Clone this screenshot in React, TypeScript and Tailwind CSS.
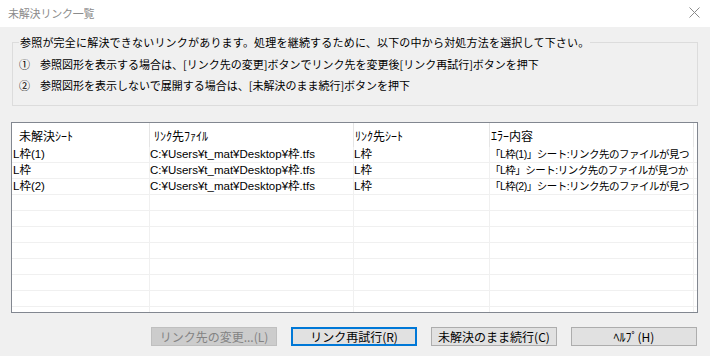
import React from "react";

const FONT = '"Noto Sans CJK JP", sans-serif';
const TABLE_FONT = '"Liberation Sans", "Noto Sans CJK JP", sans-serif';

type Row = { sheet: string; file: string; target: string; error: string };

const rows: Row[] = [
  { sheet: "L枠(1)", file: "C:¥Users¥t_mat¥Desktop¥枠.tfs", target: "L枠", error: "「L枠(1)」シート:リンク先のファイルが見つ" },
  { sheet: "L枠", file: "C:¥Users¥t_mat¥Desktop¥枠.tfs", target: "L枠", error: "「L枠」シート:リンク先のファイルが見つか" },
  { sheet: "L枠(2)", file: "C:¥Users¥t_mat¥Desktop¥枠.tfs", target: "L枠", error: "「L枠(2)」シート:リンク先のファイルが見つ" },
];

const headers = [
  { label: "未解決ｼｰﾄ", cls: "w-[138px] pl-[7px]" },
  { label: "ﾘﾝｸ先ﾌｧｲﾙ", cls: "w-[204px] pl-[4px]" },
  { label: "ﾘﾝｸ先ｼｰﾄ", cls: "w-[136px] pl-[1px]" },
  { label: "ｴﾗｰ内容", cls: "w-[204px] pl-[1px]" },
];

export default function App() {
  const filler = Array.from({ length: 8 });

  return (
    <div className="flex h-[356px] w-[710px] flex-col bg-[#f0f0f0] text-[12px] text-black" style={{ fontFamily: FONT }}>
      {/* title bar */}
      <div className="flex h-[27px] items-center justify-between bg-white pl-2 pr-[10px]">
        <span className="text-[11px] tracking-[-0.2px] text-[#8c8c8c]">未解決リンク一覧</span>
        <svg width="11" height="11" viewBox="0 0 11 11" className="mb-[3px]">
          <path d="M0.5 0.5 L10.5 10.5 M10.5 0.5 L0.5 10.5" stroke="#8a8a8a" strokeWidth="1" />
        </svg>
      </div>

      {/* instructions group */}
      <fieldset className="mx-[12px] mt-[8px] h-[71px] border border-[#dcdcdc] pl-[6px]">
        <legend className="px-[1px] text-[11px] leading-[14px] tracking-[0.2px]">
          参照が完全に解決できないリンクがあります。処理を継続するために、以下の中から対処方法を選択して下さい。
        </legend>
        <div className="mt-[8px] flex flex-col gap-[7px] text-[11px] leading-[14px]">
          <div className="flex">
            <span className="w-[21px]">①</span>
            <span>参照図形を表示する場合は、[リンク先の変更]ボタンでリンク先を変更後[リンク再試行]ボタンを押下</span>
          </div>
          <div className="flex">
            <span className="w-[21px]">②</span>
            <span>参照図形を表示しないで展開する場合は、[未解決のまま続行]ボタンを押下</span>
          </div>
        </div>
      </fieldset>

      {/* list */}
      <div
        className="mx-[11px] mt-[16px] h-[191px] w-[687px] overflow-hidden border border-[#828790] bg-white text-[11.5px]"
        style={{ fontFamily: TABLE_FONT }}
      >
        <div className="flex h-[24px]" style={{ fontFamily: FONT }}>
          {headers.map((h) => (
            <div
              key={h.label}
              className={`${h.cls} flex h-full shrink-0 items-center border-r border-[#e5e5e5] pt-[2px] text-[12px]`}
            >
              {h.label}
            </div>
          ))}
        </div>
        {rows.map((r) => (
          <div key={r.sheet} className="flex h-[16px] border-b border-[#f0f0f0] leading-[15px]">
            <div className="w-[138px] shrink-0 whitespace-nowrap border-r border-[#f0f0f0] pl-[1px]">{r.sheet}</div>
            <div className="w-[204px] shrink-0 whitespace-nowrap border-r border-[#f0f0f0]">{r.file}</div>
            <div className="w-[136px] shrink-0 whitespace-nowrap border-r border-[#f0f0f0]">{r.target}</div>
            <div className="w-[204px] shrink-0 whitespace-nowrap border-r border-[#f0f0f0] text-[10.5px] tracking-[-0.5px]">
              {r.error}
            </div>
          </div>
        ))}
        {filler.map((_, i) => (
          <div key={i} className="flex h-[16px] border-b border-[#f0f0f0]">
            <div className="w-[138px] shrink-0 border-r border-[#f0f0f0]" />
            <div className="w-[204px] shrink-0 border-r border-[#f0f0f0]" />
            <div className="w-[136px] shrink-0 border-r border-[#f0f0f0]" />
            <div className="w-[204px] shrink-0 border-r border-[#f0f0f0]" />
          </div>
        ))}
      </div>

      {/* buttons */}
      <div className="mt-[14px] flex justify-end gap-[14px] pr-[13px]">
        <button className="h-[19px] w-[126px] border border-[#bfbfbf] bg-[#cccccc] text-[12px] leading-[17px] text-[#838383]">
          リンク先の変更...(L)
        </button>
        <button className="h-[19px] w-[126px] border-2 border-[#0078d7] bg-[#e1e1e1] text-[12px] leading-[15px]">
          リンク再試行(R)
        </button>
        <button className="h-[19px] w-[126px] border border-[#adadad] bg-[#e1e1e1] text-[12px] leading-[17px]">
          未解決のまま続行(C)
        </button>
        <button className="h-[19px] w-[126px] border border-[#adadad] bg-[#e1e1e1] text-[12px] leading-[17px]">
          ﾍﾙﾌﾟ(H)
        </button>
      </div>
    </div>
  );
}
